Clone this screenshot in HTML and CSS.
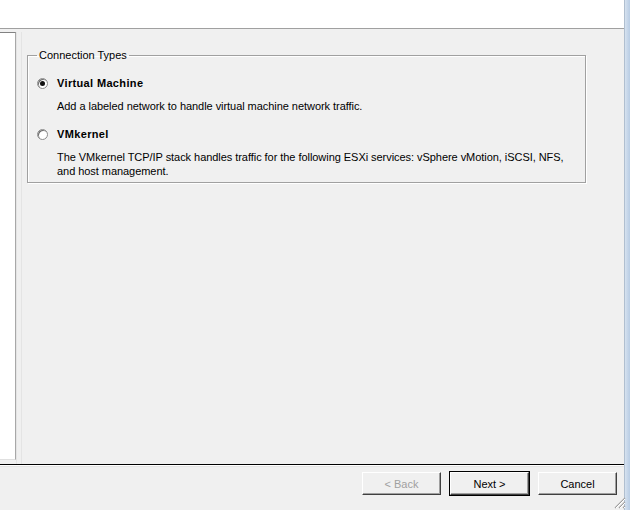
FILE: index.html
```html
<!DOCTYPE html>
<html>
<head>
<meta charset="utf-8">
<link rel="stylesheet" href="styles.css">
</head>
<body>
<div class="window">
  <div class="main">
    <div class="header"></div>
    <div class="body">
      <div class="side"></div>
      <div class="splitter"></div>
      <div class="content">
        <fieldset class="group">
          <legend class="legend">Connection Types</legend>
          <div class="option">
            <span class="radio checked"></span>
            <span class="opt-title">Virtual Machine</span>
          </div>
          <p class="desc">Add a labeled network to handle virtual machine network traffic.</p>
          <div class="option">
            <span class="radio"></span>
            <span class="opt-title">VMkernel</span>
          </div>
          <p class="desc">The VMkernel TCP/IP stack handles traffic for the following ESXi services: vSphere vMotion, iSCSI, NFS,<br>and host management.</p>
        </fieldset>
      </div>
    </div>
    <div class="footer">
      <button class="btn disabled">&lt; Back</button>
      <button class="btn default">Next &gt;</button>
      <button class="btn">Cancel</button>
    </div>
  </div>
  <div class="edge"></div>
  <svg class="grip" width="14" height="14" viewBox="0 0 14 14">
    <path d="M13 3 L3 13 M13 7 L7 13 M13 11 L11 13" stroke="#a0a0a0" stroke-width="1.2"/>
    <path d="M13 4 L4 13 M13 8 L8 13 M13 12 L12 13" stroke="#ffffff" stroke-width="1"/>
  </svg>
</div>
</body>
</html>
```
FILE: styles.css
```css
* { box-sizing: border-box; }
html, body { margin: 0; padding: 0; }
body {
  width: 630px;
  height: 510px;
  overflow: hidden;
  background: #f0f0f0;
  font-family: "Liberation Sans", "DejaVu Sans", sans-serif;
  font-size: 11px;
  color: #000;
}
.window {
  position: relative;
  display: flex;
  width: 630px;
  height: 510px;
}
.main {
  flex: 1;
  display: flex;
  flex-direction: column;
}
.edge {
  width: 6px;
  background: linear-gradient(to right, #d6e2ef, #c3d4e8 60%, #b9cde4);
  border-left: 1px solid #b0bfd0;
}
.header {
  height: 29px;
  background: #fff;
  border-bottom: 1px solid #a0a0a0;
}
.body {
  flex: 1;
  display: flex;
  padding-top: 3px;
}
.side {
  width: 16px;
  height: 428px;
  background: #fff;
  border-top: 1px solid #828282;
  border-right: 1px solid #a8a8a8;
  border-bottom: 1px solid #e0e0e0;
}
.splitter {
  width: 6px;
  border-left: 1px solid #e4e4e4;
  border-right: 1px solid #e4e4e4;
}
.content {
  flex: 1;
  padding: 17px 0 0 5px;
}
.group {
  margin: 0;
  width: 559px;
  height: 134px;
  border: 1px solid #a0a0a0;
  box-shadow: 1px 1px 0 #fff inset, 1px 1px 0 #fff;
  padding: 6px 0 0 9px;
}
.legend {
  padding: 0 2px;
  margin-left: 0;
  line-height: 13px;
}
.option {
  display: flex;
  align-items: center;
  height: 14px;
  margin-top: 8px;
}
.radio {
  width: 11px;
  height: 11px;
  border-radius: 50%;
  background: #fff;
  border: 1px solid #8c8c8c;
  box-shadow: inset 1px 1px 0 #6e6e6e;
  margin-right: 9px;
  position: relative;
  flex: none;
}
.radio.checked::after {
  content: "";
  position: absolute;
  left: 2px;
  top: 2px;
  width: 5px;
  height: 5px;
  border-radius: 50%;
  background: #111;
}
.opt-title {
  font-weight: bold;
  font-size: 11px;
  letter-spacing: 0.35px;
}
.desc {
  margin: 9px 0 14px 20px;
  line-height: 14px;
  letter-spacing: -0.05px;
}
.footer {
  height: 46px;
  border-top: 1px solid #000;
  box-shadow: inset 0 1px 0 #fff, inset 0 2px 0 #e4e4e4;
  display: flex;
  justify-content: flex-end;
  align-items: flex-start;
  gap: 9px;
  padding: 7px 7px 0 0;
}
.btn {
  width: 79px;
  height: 23px;
  font-family: inherit;
  font-size: 11px;
  color: #000;
  background: #f0f0f0;
  border: 1px solid;
  border-color: #fff #404040 #404040 #fff;
  box-shadow: inset -1px -1px 0 #a0a0a0;
  padding: 0;
  margin: 0;
}
.btn.disabled { color: #a0a0a0; }
.btn.default {
  outline: 1px solid #000;
  outline-offset: 0;
  border-color: #fff #404040 #404040 #fff;
}
.grip {
  position: absolute;
  right: 4px;
  bottom: 1px;
}
```
